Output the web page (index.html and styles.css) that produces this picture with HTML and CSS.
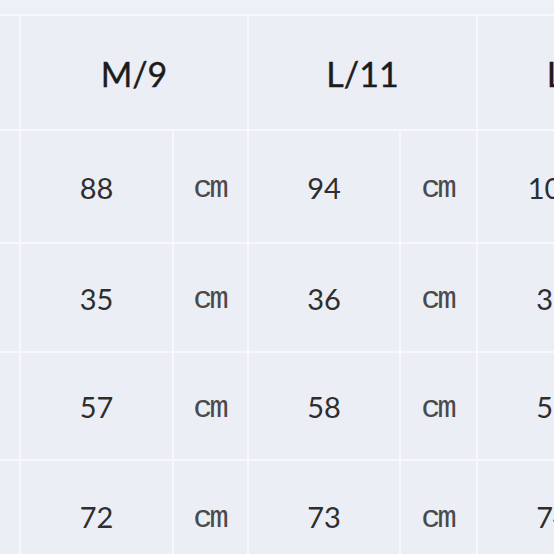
FILE: index.html
```html
<!DOCTYPE html>
<html>
<head>
<meta charset="utf-8">
<link rel="stylesheet" href="styles.css">
</head>
<body>
<div class="sheet">
  <div class="grid">
    <div class="cell top"></div>

    <div class="cell"></div>
    <div class="cell head span2">M/9</div>
    <div class="cell head span2">L/11</div>
    <div class="cell head span2">LL/13</div>

    <div class="cell"></div>
    <div class="cell num">88</div><div class="cell unit">cm</div>
    <div class="cell num">94</div><div class="cell unit">cm</div>
    <div class="cell num">100</div><div class="cell unit">cm</div>

    <div class="cell"></div>
    <div class="cell num">35</div><div class="cell unit">cm</div>
    <div class="cell num">36</div><div class="cell unit">cm</div>
    <div class="cell num">37</div><div class="cell unit">cm</div>

    <div class="cell"></div>
    <div class="cell num">57</div><div class="cell unit">cm</div>
    <div class="cell num">58</div><div class="cell unit">cm</div>
    <div class="cell num">59</div><div class="cell unit">cm</div>

    <div class="cell"></div>
    <div class="cell num">72</div><div class="cell unit">cm</div>
    <div class="cell num">73</div><div class="cell unit">cm</div>
    <div class="cell num">74</div><div class="cell unit">cm</div>
  </div>
</div>
</body>
</html>
```
FILE: styles.css
```css
html, body {
  margin: 0;
  padding: 0;
  background: #eceef6;
}
.sheet {
  width: 554px;
  height: 554px;
  overflow: hidden;
}
.grid {
  display: grid;
  grid-template-columns: 19px 151px 73px 150px 75px 150px 75px;
  grid-template-rows: 14px 113px 111px 107px 106px 110px;
  gap: 2px;
  background: #f7f8fc;
  width: max-content;
}
.cell {
  background: #eceef6;
  display: flex;
  align-items: center;
  justify-content: center;
  white-space: nowrap;
}
.top {
  grid-column: 1 / -1;
  background: #eef0f7;
}
.span2 {
  grid-column: span 2;
}
.head {
  font-family: Lato, "Open Sans", sans-serif;
  font-size: 34px;
  color: #1c1c1c;
  padding-top: 2px;
  -webkit-text-stroke: 0.4px #1c1c1c;
}
.num {
  font-family: Lato, "Open Sans", sans-serif;
  font-size: 29px;
  color: #2e2e2e;
  padding-top: 1px;
}
.unit {
  font-family: "Liberation Mono", monospace;
  font-size: 32px;
  letter-spacing: -3px;
  color: #4a4a4a;
  padding-top: 4px;
  padding-right: 2px;
}
```
